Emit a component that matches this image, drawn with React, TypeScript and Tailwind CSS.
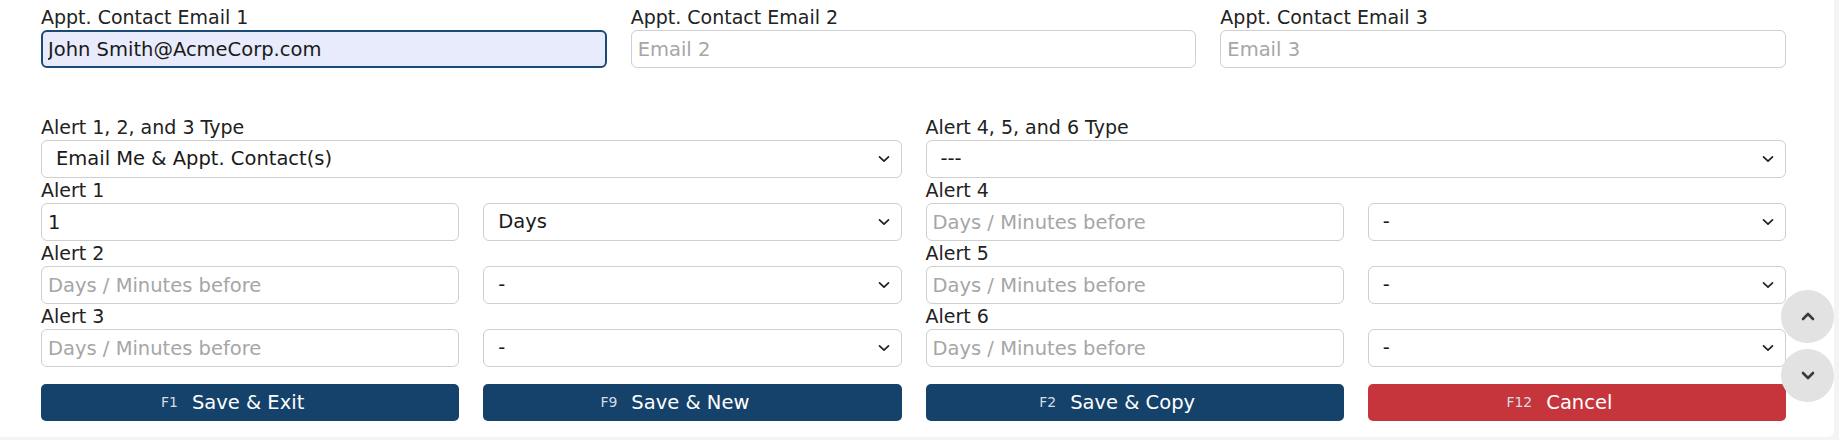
import React from 'react';

const font = { fontFamily: '"DejaVu Sans", "Liberation Sans", sans-serif' };

const Chevron = () => (
  <svg
    className="pointer-events-none absolute right-[12px] top-1/2 -translate-y-1/2"
    width="12"
    height="8"
    viewBox="0 0 12 8"
    fill="none"
  >
    <path d="M1.5 1.8l4.5 4.4 4.5-4.4" stroke="#222" strokeWidth="1.7" strokeLinecap="round" strokeLinejoin="round" />
  </svg>
);

const Label = ({ children }: { children: React.ReactNode }) => (
  <div className="h-[25px] leading-[25px] text-[19px] text-[#222]">{children}</div>
);

const TextInput = ({ placeholder, value, focused }: { placeholder?: string; value?: string; focused?: boolean }) => (
  <input
    defaultValue={value}
    placeholder={placeholder}
    className={
      focused
        ? 'h-[38px] w-full rounded-[6px] border-2 border-[#1b4a74] bg-[#e8ebfb] px-[5px] text-[19.5px] text-[#1a1a1a] outline-none'
        : 'h-[38px] w-full rounded-[6px] border border-[#cfcfcf] bg-white px-[6px] text-[19.5px] text-[#1a1a1a] outline-none placeholder:text-[#a6a6a6]'
    }
    style={font}
  />
);

const Select = ({ value }: { value: string }) => (
  <div className="relative">
    <select
      defaultValue={value}
      className="h-[38px] w-full appearance-none rounded-[6px] border border-[#cfcfcf] bg-white pl-[14px] text-[19.5px] text-[#1a1a1a] outline-none"
      style={font}
    >
      <option>{value}</option>
    </select>
    <Chevron />
  </div>
);

const ActionButton = ({ fkey, label, red }: { fkey: string; label: string; red?: boolean }) => (
  <button
    className={`flex h-[37px] items-center justify-center gap-[14px] rounded-[5px] pr-[35px] text-white ${
      red ? 'bg-[#c6353b]' : 'bg-[#15426b]'
    }`}
    style={font}
  >
    <span className="text-[14px] text-[#d4dbe4]">{fkey}</span>
    <span className="text-[19.5px]">{label}</span>
  </button>
);

export default function App() {
  return (
    <div className="h-[440px] w-[1839px] overflow-hidden bg-[#f4f4f4]" style={font}>
      <div className="relative h-[437px] w-[1834px] rounded-br-[6px] bg-white pl-[41px] pr-[48px] pt-[5px]">
        {/* Contact emails */}
        <div className="grid grid-cols-3 gap-x-6">
          <div>
            <Label>Appt. Contact Email 1</Label>
            <TextInput value="John Smith@AcmeCorp.com" focused />
          </div>
          <div>
            <Label>Appt. Contact Email 2</Label>
            <TextInput placeholder="Email 2" />
          </div>
          <div>
            <Label>Appt. Contact Email 3</Label>
            <TextInput placeholder="Email 3" />
          </div>
        </div>

        {/* Alert types */}
        <div className="mt-[47px] grid grid-cols-2 gap-x-6">
          <div>
            <Label>Alert 1, 2, and 3 Type</Label>
            <Select value="Email Me & Appt. Contact(s)" />
          </div>
          <div>
            <Label>Alert 4, 5, and 6 Type</Label>
            <Select value="---" />
          </div>
        </div>

        {/* Alerts */}
        <div className="grid grid-cols-4 gap-x-6">
          {[
            ['Alert 1', 'Alert 4'],
            ['Alert 2', 'Alert 5'],
            ['Alert 3', 'Alert 6'],
          ].map(([a, b], i) => (
            <React.Fragment key={a}>
              <div className="col-span-2">
                <Label>{a}</Label>
              </div>
              <div className="col-span-2">
                <Label>{b}</Label>
              </div>
              {i === 0 ? <TextInput value="1" /> : <TextInput placeholder="Days / Minutes before" />}
              <Select value={i === 0 ? 'Days' : '-'} />
              <TextInput placeholder="Days / Minutes before" />
              <Select value="-" />
            </React.Fragment>
          ))}
        </div>

        {/* Buttons */}
        <div className="mt-[17px] grid grid-cols-4 gap-x-6">
          <ActionButton fkey="F1" label="Save & Exit" />
          <ActionButton fkey="F9" label="Save & New" />
          <ActionButton fkey="F2" label="Save & Copy" />
          <ActionButton fkey="F12" label="Cancel" red />
        </div>

        {/* Scroll helpers */}
        <div className="absolute left-[1781px] top-[290px] flex flex-col gap-[6px]">
          <button className="flex h-[53px] w-[53px] items-center justify-center rounded-full bg-[#e2e2e2]">
            <svg width="14" height="9" viewBox="0 0 14 9" fill="none">
              <path d="M2 7l5-5 5 5" stroke="#3a3a3a" strokeWidth="2.6" strokeLinecap="round" strokeLinejoin="round" />
            </svg>
          </button>
          <button className="flex h-[53px] w-[53px] items-center justify-center rounded-full bg-[#e2e2e2]">
            <svg width="14" height="9" viewBox="0 0 14 9" fill="none">
              <path d="M2 2l5 5 5-5" stroke="#3a3a3a" strokeWidth="2.6" strokeLinecap="round" strokeLinejoin="round" />
            </svg>
          </button>
        </div>
      </div>
    </div>
  );
}
